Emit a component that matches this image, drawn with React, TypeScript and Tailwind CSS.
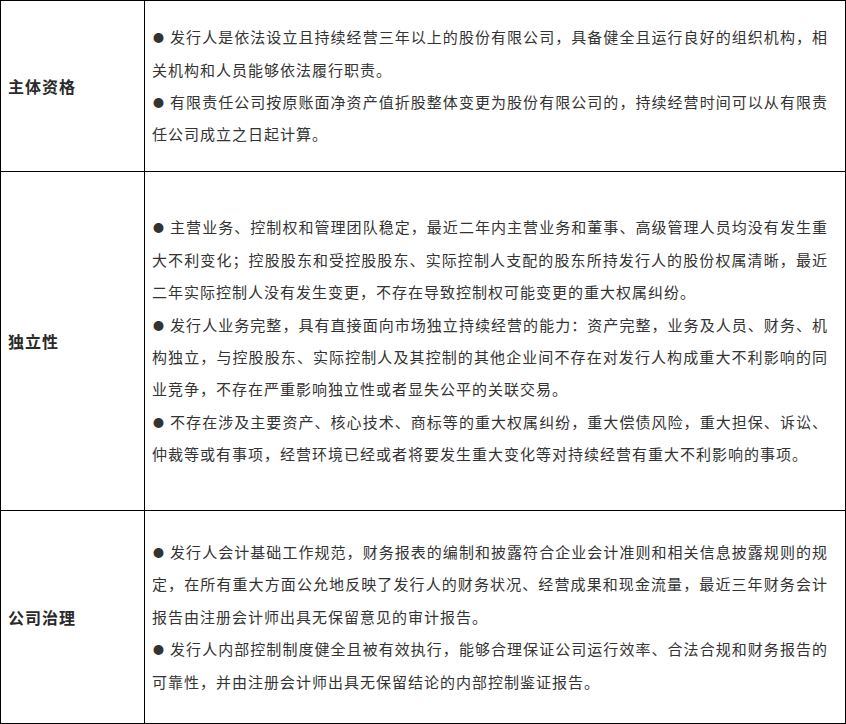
import React from "react";

type Para = string[];

const rows: { title: string; h: string; paras: Para[] }[] = [
  {
    title: "主体资格",
    h: "h-[171px] border-b",
    paras: [
      [
        "发行人是依法设立且持续经营三年以上的股份有限公司，具备健全且运行良好的组织机构，相",
        "关机构和人员能够依法履行职责。",
      ],
      [
        "有限责任公司按原账面净资产值折股整体变更为股份有限公司的，持续经营时间可以从有限责",
        "任公司成立之日起计算。",
      ],
    ],
  },
  {
    title: "独立性",
    h: "h-[339px] border-b",
    paras: [
      [
        "主营业务、控制权和管理团队稳定，最近二年内主营业务和董事、高级管理人员均没有发生重",
        "大不利变化；控股股东和受控股股东、实际控制人支配的股东所持发行人的股份权属清晰，最近",
        "二年实际控制人没有发生变更，不存在导致控制权可能变更的重大权属纠纷。",
      ],
      [
        "发行人业务完整，具有直接面向市场独立持续经营的能力：资产完整，业务及人员、财务、机",
        "构独立，与控股股东、实际控制人及其控制的其他企业间不存在对发行人构成重大不利影响的同",
        "业竞争，不存在严重影响独立性或者显失公平的关联交易。",
      ],
      [
        "不存在涉及主要资产、核心技术、商标等的重大权属纠纷，重大偿债风险，重大担保、诉讼、",
        "仲裁等或有事项，经营环境已经或者将要发生重大变化等对持续经营有重大不利影响的事项。",
      ],
    ],
  },
  {
    title: "公司治理",
    h: "h-[212px]",
    paras: [
      [
        "发行人会计基础工作规范，财务报表的编制和披露符合企业会计准则和相关信息披露规则的规",
        "定，在所有重大方面公允地反映了发行人的财务状况、经营成果和现金流量，最近三年财务会计",
        "报告由注册会计师出具无保留意见的审计报告。",
      ],
      [
        "发行人内部控制制度健全且被有效执行，能够合理保证公司运行效率、合法合规和财务报告的",
        "可靠性，并由注册会计师出具无保留结论的内部控制鉴证报告。",
      ],
    ],
  },
];

function Paragraph({ lines }: { lines: Para }) {
  return (
    <div>
      {lines.map((line, i) => {
        const last = i === lines.length - 1;
        return (
          <div
            key={i}
            className={
              last
                ? "leading-[32.4px] whitespace-nowrap"
                : "leading-[32.4px] whitespace-nowrap text-justify [text-align-last:justify]"
            }
          >
            {i === 0 && (
              <span className="inline-block w-[18px] pl-[1px] text-[11px] tracking-normal align-[1px]">
                ●
              </span>
            )}
            {line}
          </div>
        );
      })}
    </div>
  );
}

export default function App() {
  return (
    <div className="w-[846px] h-[724px] bg-white border border-black flex flex-col font-['Noto_Sans_CJK_SC','Noto_Sans',sans-serif] text-[#333333]">
      {rows.map((r) => (
        <div key={r.title} className={`flex border-black ${r.h}`}>
          <div className="w-[144px] shrink-0 border-r border-black flex items-center pl-[7px]">
            <span className="text-[16px] font-bold tracking-[1px] text-[#2a2a2a]">{r.title}</span>
          </div>
          <div className="flex-1 flex flex-col justify-center pl-[7px] pr-[17px] text-[15px] tracking-[1px]">
            {r.paras.map((p, i) => (
              <Paragraph key={i} lines={p} />
            ))}
          </div>
        </div>
      ))}
    </div>
  );
}
